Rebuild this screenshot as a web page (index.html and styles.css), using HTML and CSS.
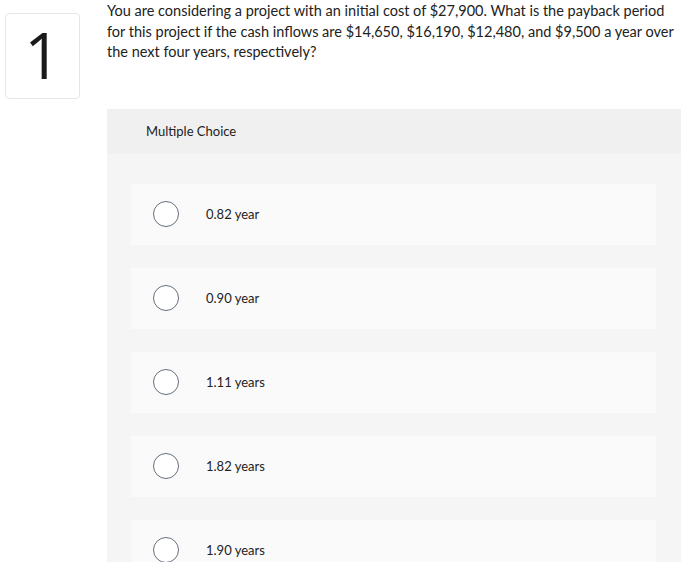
FILE: index.html
```html
<!DOCTYPE html>
<html>
<head>
<meta charset="utf-8">
<link rel="stylesheet" href="styles.css">
</head>
<body>
<div class="viewport">
  <div class="question">
    <div class="num-box"><span>1</span></div>
    <div class="main">
      <p class="prompt">You are considering a project with an initial cost of $27,900. What is the payback period for this project if the cash inflows are $14,650, $16,190, $12,480, and $9,500 a year over the next four years, respectively?</p>
      <div class="panel">
        <div class="panel-head">Multiple Choice</div>
        <div class="panel-body">
          <div class="choice"><span class="radio"></span><span class="label">0.82 year</span></div>
          <div class="choice"><span class="radio"></span><span class="label">0.90 year</span></div>
          <div class="choice"><span class="radio"></span><span class="label">1.11 years</span></div>
          <div class="choice"><span class="radio"></span><span class="label">1.82 years</span></div>
          <div class="choice"><span class="radio"></span><span class="label">1.90 years</span></div>
        </div>
      </div>
    </div>
  </div>
</div>
</body>
</html>
```
FILE: styles.css
```css
html, body {
  margin: 0;
  padding: 0;
  background: #ffffff;
}
body {
  font-family: Lato, "Open Sans", sans-serif;
  color: #222;
}
.viewport {
  height: 562px;
  overflow: hidden;
}
.question {
  display: flex;
  align-items: flex-start;
}
.num-box {
  margin: 13px 0 0 5px;
  width: 73px;
  height: 84px;
  border: 1px solid #e6e6e6;
  border-radius: 4px;
  display: flex;
  align-items: center;
  justify-content: center;
  flex-shrink: 0;
}
.num-box span {
  font-family: "Open Sans", sans-serif;
  font-size: 64px;
  line-height: 1;
  color: #1a1a1a;
  font-weight: 400;
  margin-top: -2px;
}
.main {
  margin-left: 27px;
  width: 574px;
}
.prompt {
  margin: 1px 0 0 0;
  font-size: 14.5px;
  line-height: 20.5px;
  color: #222;
  padding-right: 2px;
}
.panel {
  margin-top: 46px;
  background: #f5f5f5;
}
.panel-head {
  height: 45px;
  background: #f0f0f0;
  display: flex;
  align-items: center;
  padding-left: 39px;
  font-size: 13px;
  color: #222;
}
.panel-body {
  padding: 30px 25px 40px 24px;
  display: flex;
  flex-direction: column;
  gap: 23px;
}
.choice {
  height: 61px;
  background: #fafafa;
  display: flex;
  align-items: center;
  padding-left: 22px;
}
.radio {
  width: 24px;
  height: 24px;
  border: 1.5px solid #66707c;
  border-radius: 50%;
  background: #fff;
  flex-shrink: 0;
}
.label {
  margin-left: 27px;
  font-size: 13px;
  color: #222;
}
```
